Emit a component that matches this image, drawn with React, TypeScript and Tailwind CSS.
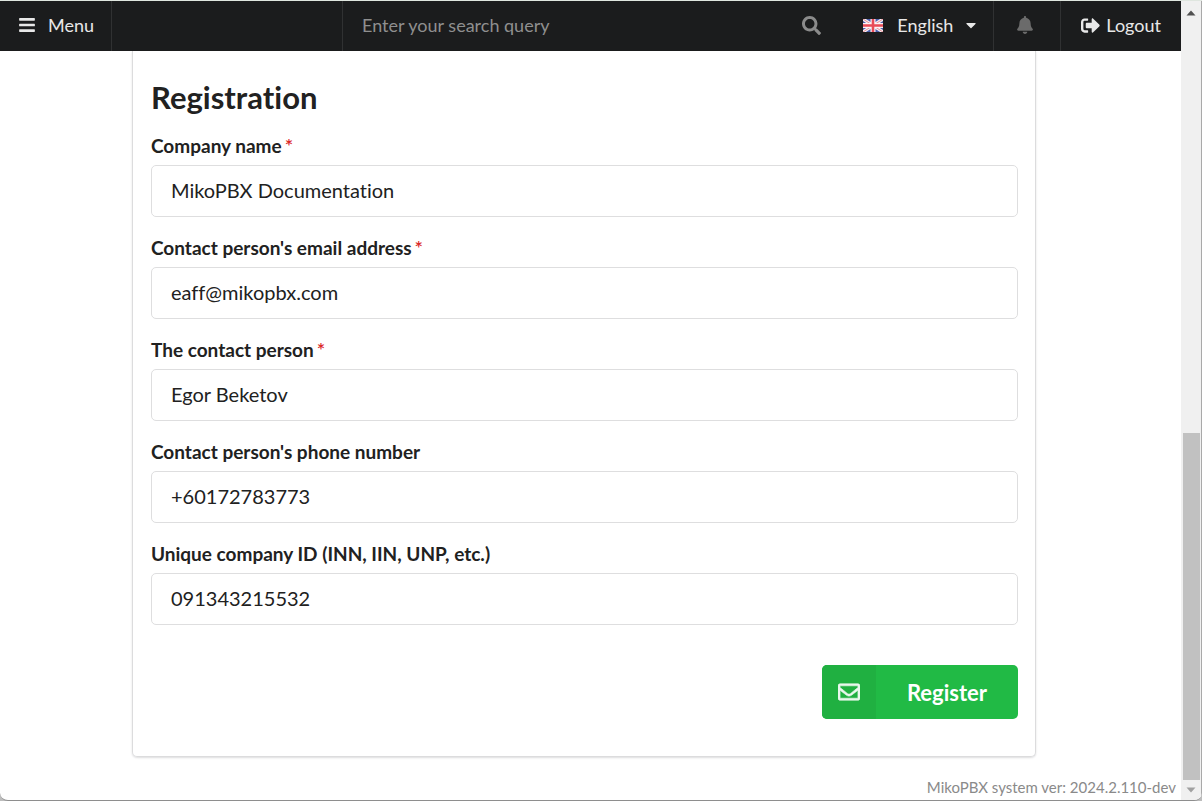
import { useState } from "react";
import {
  FaBars,
  FaBell,
  FaCaretDown,
  FaRegEnvelope,
  FaSearch,
  FaSignOutAlt,
} from "react-icons/fa";

type FieldDef = {
  id: string;
  label: string;
  value: string;
  type: string;
  required?: boolean;
};

const FIELDS: FieldDef[] = [
  { id: "company", label: "Company name", value: "MikoPBX Documentation", type: "text", required: true },
  { id: "email", label: "Contact person's email address", value: "eaff@mikopbx.com", type: "email", required: true },
  { id: "contact", label: "The contact person", value: "Egor Beketov", type: "text", required: true },
  { id: "phone", label: "Contact person's phone number", value: "+60172783773", type: "tel" },
  { id: "inn", label: "Unique company ID (INN, IIN, UNP, etc.)", value: "091343215532", type: "text" },
];

function UkFlag() {
  return (
    <svg viewBox="0 0 20 13" className="h-[13px] w-5" aria-hidden="true">
      <rect width="20" height="13" fill="#4a5cab" />
      <path d="M0 0L20 13M20 0L0 13" stroke="#f3eef2" strokeWidth="3.2" />
      <path d="M0 0L20 13M20 0L0 13" stroke="#ea8f97" strokeWidth="1" />
      <path d="M10 0V13M0 6.5H20" stroke="#fbf3f5" strokeWidth="5" />
      <path d="M10 0V13M0 6.5H20" stroke="#e84a56" strokeWidth="2.6" />
    </svg>
  );
}

function TopBar() {
  return (
    <header className="flex h-[50px] shrink-0 bg-[#1b1c1d] text-lg text-white/90">
      <button type="button" className="flex w-28 shrink-0 items-center gap-3 border-r border-[#303132] pb-0.5 pl-[18px]">
        <FaBars className="size-[18px]" />
        Menu
      </button>
      <div className="w-[231px] shrink-0 border-r border-[#303132]" />
      <form className="flex min-w-0 flex-1 items-center pr-[22px] pb-0.5 pl-[19px]" onSubmit={(e) => e.preventDefault()}>
        <input
          type="search"
          aria-label="Search"
          placeholder="Enter your search query"
          className="min-w-0 flex-1 bg-transparent outline-none placeholder:text-[#8f8f8f]"
        />
        <button type="submit" aria-label="Run search" className="text-[#8b8b8b]">
          <FaSearch className="size-[19px]" />
        </button>
      </form>
      <button type="button" className="flex shrink-0 items-center border-r border-[#303132] pr-[14px] pb-0.5 pl-5">
        <UkFlag />
        <span className="ml-[14px]">English</span>
        <FaCaretDown className="ml-[10px] size-4" />
      </button>
      <a href="#notifications" aria-label="Notifications" className="flex w-[67px] shrink-0 items-center justify-center border-r border-[#303132] pr-1 pb-0.5 text-[#6b6b6b]">
        <FaBell className="size-[18px]" />
      </a>
      <a href="#logout" className="flex shrink-0 items-center gap-1.5 pr-5 pb-0.5 pl-5">
        <FaSignOutAlt className="size-[19px]" />
        Logout
      </a>
    </header>
  );
}

function Field({ id, label, value, type, required }: FieldDef) {
  const [text, setText] = useState(value);
  return (
    <div className="flex flex-col gap-1.5">
      <label htmlFor={id} className="flex h-6 items-center gap-[3px] pb-0.5 text-[19px] leading-6 font-bold">
        {label}
        {required && <span className="self-start text-xl leading-5 font-semibold text-[#db2828]">*</span>}
      </label>
      <input
        id={id}
        type={type}
        value={text}
        onChange={(e) => setText(e.target.value)}
        className="h-[52px] w-full rounded-[5px] border border-[#dededf] bg-white px-[19px] pb-0.5 text-xl outline-none focus:border-[#85b7d9]"
      />
    </div>
  );
}

function ScrollTrack() {
  return (
    <div aria-hidden="true" className="flex w-[21px] shrink-0 flex-col items-center border-r border-[#a9a9a9] bg-[#f0f0f0]">
      <svg viewBox="0 0 20 20" className="h-5 w-5 shrink-0">
        <path d="M5.5 14.5L10 9.5L14.5 14.5Z" fill="#505050" />
      </svg>
      <div className="grow-[412]" />
      <div className="w-[17px] grow-[347] bg-[#c1c1c1]" />
      <svg viewBox="0 0 20 20" className="h-5 w-5 shrink-0">
        <path d="M5.5 7.5L10 12.5L14.5 7.5Z" fill="#a0a0a0" />
      </svg>
    </div>
  );
}

export default function App() {
  return (
    <div className="min-h-screen bg-[#bdbdbd] font-[Lato,sans-serif] text-[#212121] [font-variant-ligatures:none]">
      <div className="flex min-h-screen overflow-hidden rounded-b-lg border-t border-b border-t-[#dfe6df] border-b-[#8e8e8e] bg-white">
        <div className="flex min-w-0 flex-1 flex-col">
          <TopBar />
          <main className="pr-[145px] pl-[132px]">
            <form
              className="rounded-b-[5px] border border-t-0 border-[#dcdcdd] pt-[27px] pr-[17px] pb-[37px] pl-[18px] shadow-[0_1px_2px_rgba(34,36,38,0.15)]"
              onSubmit={(e) => e.preventDefault()}
            >
              <h1 className="mb-[18px] text-[31px] leading-[39px] font-bold">Registration</h1>
              <div className="flex flex-col gap-5">
                {FIELDS.map((f) => (
                  <Field key={f.id} {...f} />
                ))}
              </div>
              <div className="mt-10 flex justify-end">
                <button type="submit" className="flex h-[54px] overflow-hidden rounded-[5px] bg-[#21ba45] text-[22px] font-bold text-white">
                  <span className="flex h-full w-[54px] items-center justify-center bg-[#20b041]">
                    <FaRegEnvelope className="size-[22px] opacity-90" strokeWidth="14" />
                  </span>
                  <span className="flex h-full items-center px-[31px]">Register</span>
                </button>
              </div>
            </form>
          </main>
          <footer className="mt-auto pr-[5px] pb-0.5 text-right text-[15px] leading-[22px] text-[#8a8a8a]">
            MikoPBX system ver: 2024.2.110-dev
          </footer>
        </div>
        <ScrollTrack />
      </div>
    </div>
  );
}
